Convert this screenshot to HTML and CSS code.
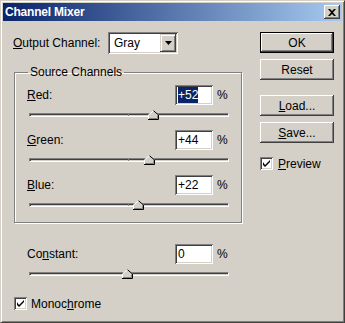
FILE: index.html
```html
<!DOCTYPE html>
<html lang="en">
<head>
  <meta charset="UTF-8" />
  <title>Channel Mixer</title>
  <link rel="stylesheet" href="styles.css">
</head>
<body>

  <div class="window">
    <div class="titlebar">
      <span class="title">Channel Mixer</span>
      <span class="close-btn">
        <svg width="8" height="7" viewBox="0 0 8 7"><path d="M0 0 L2 0 L4 2 L6 0 L8 0 L5 3.5 L8 7 L6 7 L4 5 L2 7 L0 7 L3 3.5 Z" fill="#000"/></svg>
      </span>
    </div>

    <div class="content">
      <div class="left-col">
        <div class="output-row">
          <span class="out-label"><u>O</u>utput Channel:</span>
          <div class="select">
            <span class="select-text">Gray</span>
            <span class="select-btn">
              <svg width="7" height="4" viewBox="0 0 7 4"><path d="M0 0 H7 L3.5 4 Z" fill="#000"/></svg>
            </span>
          </div>
        </div>

        <fieldset class="group">
          <legend>Source Channels</legend>

          <div class="chan-row">
            <span class="chan-label"><u>R</u>ed:</span>
            <span class="num-input"><span class="selected">+52</span></span>
            <span class="pct">%</span>
          </div>
          <div class="slider">
            <div class="track"></div>
            <span class="tick"></span>
            <svg class="thumb" style="left: 119px" width="11" height="10" viewBox="0 0 11 10">
              <polygon points="0,10 0,5 5.5,0 11,5 11,10" fill="#d4d0c8"/>
              <polyline points="0.5,9 0.5,5 5.5,0.7" fill="none" stroke="#fff"/>
              <polyline points="5.5,0.7 10.5,5 10.5,9.5 0,9.5" fill="none" stroke="#000"/>
              <polyline points="9.5,5.5 9.5,8.5 1,8.5" fill="none" stroke="#808080"/>
            </svg>
          </div>

          <div class="chan-row">
            <span class="chan-label"><u>G</u>reen:</span>
            <span class="num-input">+44</span>
            <span class="pct">%</span>
          </div>
          <div class="slider">
            <div class="track"></div>
            <span class="tick"></span>
            <svg class="thumb" style="left: 115px" width="11" height="10" viewBox="0 0 11 10">
              <polygon points="0,10 0,5 5.5,0 11,5 11,10" fill="#d4d0c8"/>
              <polyline points="0.5,9 0.5,5 5.5,0.7" fill="none" stroke="#fff"/>
              <polyline points="5.5,0.7 10.5,5 10.5,9.5 0,9.5" fill="none" stroke="#000"/>
              <polyline points="9.5,5.5 9.5,8.5 1,8.5" fill="none" stroke="#808080"/>
            </svg>
          </div>

          <div class="chan-row">
            <span class="chan-label"><u>B</u>lue:</span>
            <span class="num-input">+22</span>
            <span class="pct">%</span>
          </div>
          <div class="slider last">
            <div class="track"></div>
            <span class="tick"></span>
            <svg class="thumb" style="left: 104px" width="11" height="10" viewBox="0 0 11 10">
              <polygon points="0,10 0,5 5.5,0 11,5 11,10" fill="#d4d0c8"/>
              <polyline points="0.5,9 0.5,5 5.5,0.7" fill="none" stroke="#fff"/>
              <polyline points="5.5,0.7 10.5,5 10.5,9.5 0,9.5" fill="none" stroke="#000"/>
              <polyline points="9.5,5.5 9.5,8.5 1,8.5" fill="none" stroke="#808080"/>
            </svg>
          </div>
        </fieldset>

        <div class="constant">
          <div class="chan-row">
            <span class="chan-label">Co<u>n</u>stant:</span>
            <span class="num-input">0</span>
            <span class="pct">%</span>
          </div>
          <div class="slider last">
            <div class="track"></div>
            <span class="tick"></span>
            <svg class="thumb" style="left: 93px" width="11" height="10" viewBox="0 0 11 10">
              <polygon points="0,10 0,5 5.5,0 11,5 11,10" fill="#d4d0c8"/>
              <polyline points="0.5,9 0.5,5 5.5,0.7" fill="none" stroke="#fff"/>
              <polyline points="5.5,0.7 10.5,5 10.5,9.5 0,9.5" fill="none" stroke="#000"/>
              <polyline points="9.5,5.5 9.5,8.5 1,8.5" fill="none" stroke="#808080"/>
            </svg>
          </div>
        </div>

        <div class="check-row mono">
          <span class="checkbox">
            <svg width="7" height="7" viewBox="0 0 7 7"><path d="M0 2 L0 5 L2 7 L7 2 L7 0 L2 5 Z" fill="#000"/></svg>
          </span>
          <span>Monoc<u>h</u>rome</span>
        </div>
      </div>

      <div class="right-col">
        <button class="btn default">OK</button>
        <button class="btn reset">Reset</button>
        <button class="btn load"><u>L</u>oad...</button>
        <button class="btn save"><u>S</u>ave...</button>
        <div class="check-row preview">
          <span class="checkbox">
            <svg width="7" height="7" viewBox="0 0 7 7"><path d="M0 2 L0 5 L2 7 L7 2 L7 0 L2 5 Z" fill="#000"/></svg>
          </span>
          <span><u>P</u>review</span>
        </div>
      </div>
    </div>
  </div>

</body>
</html>
```

FILE: styles.css
```css
body {
  margin: 0;
  font-family: 'Liberation Sans', Arial, sans-serif;
  font-size: 12px;
  color: #000;
  background: #d4d0c8;
}

.window {
  width: 345px;
  height: 323px;
  box-sizing: border-box;
  padding: 2px;
  border: 1px solid;
  border-color: #d4d0c8 #404040 #404040 #d4d0c8;
  box-shadow: inset 1px 1px 0 #fff, inset -1px -1px 0 #808080;
  background: #d4d0c8;
}

.titlebar {
  height: 18px;
  display: flex;
  align-items: center;
  justify-content: space-between;
  padding-left: 2px;
  background: linear-gradient(to right, #0a246a, #a6caf0);
}

.title {
  color: #fff;
  font-weight: bold;
  font-size: 12px;
  letter-spacing: -0.2px;
}

.close-btn {
  width: 16px;
  height: 14px;
  margin-right: 2px;
  box-sizing: border-box;
  display: flex;
  align-items: center;
  justify-content: center;
  background: #d4d0c8;
  box-shadow: inset -1px -1px 0 #404040, inset 1px 1px 0 #fff, inset -2px -2px 0 #808080;
}

.content {
  display: flex;
  padding: 11px 0 0 10px;
}

.left-col {
  width: 229px;
}

.output-row {
  display: flex;
  align-items: center;
  height: 22px;
}

.out-label {
  width: 95px;
}

.select {
  width: 70px;
  height: 22px;
  box-sizing: border-box;
  display: flex;
  align-items: center;
  justify-content: space-between;
  padding: 2px;
  background: #fff;
  box-shadow: inset 1px 1px 0 #808080, inset -1px -1px 0 #fff, inset 2px 2px 0 #404040, inset -2px -2px 0 #d4d0c8;
}

.select-text {
  padding-left: 4px;
}

.select-btn {
  width: 16px;
  height: 18px;
  box-sizing: border-box;
  display: flex;
  align-items: center;
  justify-content: center;
  background: #d4d0c8;
  box-shadow: inset -1px -1px 0 #404040, inset 1px 1px 0 #d4d0c8, inset 2px 2px 0 #fff, inset -2px -2px 0 #808080;
}

.group {
  width: 228px;
  box-sizing: border-box;
  margin: 11px 0 0 1px;
  padding: 6px 12px 12px 12px;
  border: 1px solid #808080;
  box-shadow: inset 1px 1px 0 #fff, 1px 1px 0 #fff;
}

.group legend {
  padding: 0 2px;
  margin-left: 1px;
  line-height: 14px;
}

.chan-row {
  display: flex;
  align-items: center;
  height: 20px;
}

.chan-label {
  flex: 1;
}

.num-input {
  width: 38px;
  height: 20px;
  box-sizing: border-box;
  padding: 0 3px;
  line-height: 20px;
  background: #fff;
  box-shadow: inset 1px 1px 0 #808080, inset -1px -1px 0 #fff, inset 2px 2px 0 #404040, inset -2px -2px 0 #d4d0c8;
}

.selected {
  background: #0a246a;
  color: #fff;
  padding: 1px 0;
}

.pct {
  margin-left: 4px;
  width: 12px;
}

.slider {
  position: relative;
  width: 200px;
  height: 12px;
  box-sizing: border-box;
  padding-top: 5px;
  margin: 3px 0 10px 2px;
}

.slider.last {
  margin-bottom: 0;
}

.track {
  height: 4px;
  box-sizing: border-box;
  background: #d4d0c8;
  border: 1px solid;
  border-color: #808080 #fff #fff #808080;
  box-shadow: inset 1px 1px 0 #404040;
}

.tick {
  position: absolute;
  left: 99px;
  top: 6px;
  width: 1px;
  height: 2px;
  background: #808080;
}

.thumb {
  position: absolute;
  top: 2px;
}

.constant {
  width: 202px;
  margin: 21px 0 0 14px;
}

.check-row {
  display: flex;
  align-items: center;
  gap: 4px;
  height: 13px;
}

.mono {
  margin: 18px 0 0 1px;
}

.checkbox {
  width: 13px;
  height: 13px;
  box-sizing: border-box;
  display: flex;
  align-items: center;
  justify-content: center;
  background: #fff;
  box-shadow: inset 1px 1px 0 #808080, inset -1px -1px 0 #fff, inset 2px 2px 0 #404040, inset -2px -2px 0 #d4d0c8;
}

.right-col {
  width: 74px;
  margin-left: 18px;
  display: flex;
  flex-direction: column;
}

.btn {
  height: 21px;
  padding: 0;
  font-family: inherit;
  font-size: 12px;
  color: #000;
  background: #d4d0c8;
  border: none;
  box-shadow: inset -1px -1px 0 #404040, inset 1px 1px 0 #fff, inset -2px -2px 0 #808080;
}

.btn.default {
  border: 1px solid #000;
}

.btn.reset {
  margin-top: 6px;
}

.btn.load {
  margin-top: 15px;
}

.btn.save {
  margin-top: 6px;
}

.preview {
  margin-top: 14px;
  gap: 5px;
}
```
